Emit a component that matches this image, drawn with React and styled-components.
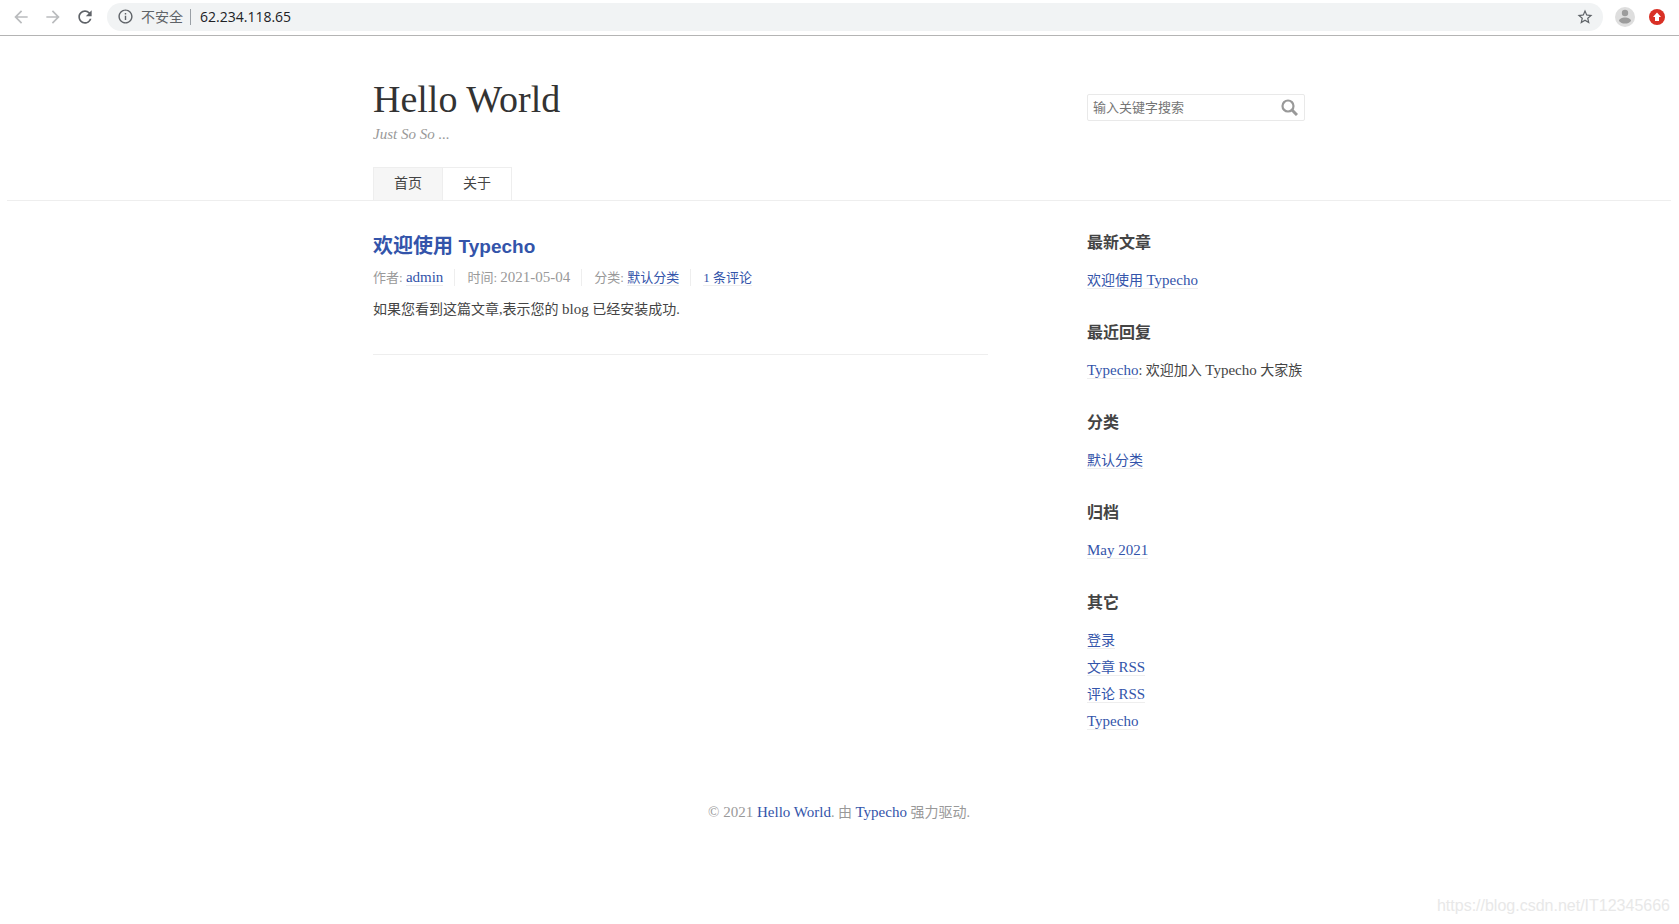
import React from "react";
import styled, { createGlobalStyle } from "styled-components";
import {
  MdArrowBack,
  MdArrowForward,
  MdRefresh,
  MdInfoOutline,
  MdStarBorder,
} from "react-icons/md";

const serif = `"Liberation Serif", "Noto Sans CJK SC", serif`;
const sans = `"Liberation Sans", "Noto Sans CJK SC", sans-serif`;

const GlobalStyle = createGlobalStyle`
  *, *::before, *::after { box-sizing: border-box; }
  body {
    margin: 0;
    background: #fff;
    color: #444;
    font-family: ${serif};
    font-size: 14px;
  }
  h1, h2, h3, p, ul { margin: 0; padding: 0; }
  ul { list-style: none; }
`;

const Page = styled.div`
  position: relative;
  min-height: 100vh;
`;

/* Browser bar */
const BrowserBar = styled.div`
  display: flex;
  align-items: center;
  height: 36px;
  padding: 0 12px 2px 11px;
  border-bottom: 1px solid #b4b4b4;
  font-family: "Open Sans", "Noto Sans CJK SC", sans-serif;
`;

const IconButton = styled.button`
  display: flex;
  align-items: center;
  justify-content: center;
  width: 20px;
  height: 20px;
  flex: none;
  margin-right: ${(p) => p.$gap || 0}px;
  padding: 0;
  border: 0;
  background: none;
  color: ${(p) => p.$color || "#5f6368"};
`;

const AddressBar = styled.div`
  display: flex;
  align-items: center;
  flex: 1;
  height: 28px;
  margin-right: 12px;
  padding: 0 8px 0 10px;
  border-radius: 14px;
  background: #f1f3f4;
`;

const Insecure = styled.span`
  margin-left: 7px;
  padding-right: 7px;
  border-right: 1px solid #9aa0a6;
  color: #5f6368;
  font-size: 14px;
  line-height: 16px;
`;

const Url = styled.input`
  flex: 1;
  min-width: 0;
  padding: 0 0 0 9px;
  border: 0;
  outline: 0;
  background: none;
  color: #202124;
  font: inherit;
  font-size: 14px;
`;

/* Blog */
const Site = styled.div`
  padding: 0 8px 0 7px;
`;

const Container = styled.div`
  display: grid;
  grid-template-columns: 9fr 3fr;
  max-width: 952px;
  margin: 0 auto;
`;

const SiteHeader = styled.header`
  padding-top: 41px;
  border-bottom: 1px solid #eee;
`;

const Brand = styled.div`
  padding: 0 10px;
`;

const SiteName = styled.h1`
  color: #333;
  font-size: 38px;
  font-weight: 400;
  line-height: 44px;

  a { color: inherit; text-decoration: none; }
`;

const Tagline = styled.p`
  margin-top: 3px;
  color: #999;
  font-size: 15px;
  font-style: italic;
  line-height: 20px;
`;

const SearchForm = styled.form`
  display: flex;
  align-items: center;
  height: 27px;
  margin: 17px 10px 0;
  padding: 0 5px;
  border: 1px solid #e9e9e9;
  border-radius: 2px;
`;

const SearchInput = styled.input`
  flex: 1;
  min-width: 0;
  padding: 0;
  border: 0;
  outline: 0;
  background: none;
  font-family: ${sans};
  font-size: 13px;

  &::placeholder { color: #757575; opacity: 1; }
`;

const Nav = styled.nav`
  display: flex;
  grid-column: 1 / -1;
  margin-top: 23px;
  padding: 0 10px;
`;

const NavLink = styled.a`
  padding: 0 20px;
  border: 1px solid #eee;
  border-bottom: 0;
  background: ${(p) => (p.$current ? "#f6f6f6" : "#fff")};
  color: #444;
  line-height: 32px;
  text-decoration: none;

  & + & { margin-left: -1px; }
`;

const Columns = styled(Container)`
  grid-template-columns: 8fr 1fr 3fr;
  padding-top: 32px;
`;

const Main = styled.main`
  padding: 0 10px;
`;

const Latin = styled.span`
  font-size: 15px;
`;

const TextLink = styled.a`
  border-bottom: ${(p) => (p.$plain ? "0" : "1px solid #eee")};
  color: #3354aa;
  text-decoration: none;
`;

const Post = styled.article`
  padding-bottom: 31px;
  border-bottom: 1px solid #eee;
`;

const PostTitle = styled.h2`
  font-family: ${sans};
  font-size: 20px;
  line-height: 26px;

  ${Latin} { font-size: 19px; }
`;

const Meta = styled.ul`
  display: flex;
  margin-top: 9px;
  color: #999;
  font-size: 13px;
  line-height: 17px;

  li + li {
    margin-left: 11px;
    padding-left: 12px;
    border-left: 1px solid #eee;
  }
`;

const PostBody = styled.p`
  margin-top: 10px;
  line-height: 27px;
`;

const Sidebar = styled.aside`
  grid-column: 3;
  padding: 0 10px;
`;

const Widget = styled.section`
  margin-bottom: 29px;
  white-space: nowrap;
  line-height: 27px;
`;

const WidgetTitle = styled.h3`
  margin-bottom: 14px;
  font-family: ${sans};
  font-size: 16px;
  line-height: 20px;
`;

const SiteFooter = styled.footer`
  padding: 35px 0 60px;
  color: #999;
  line-height: 27px;
  text-align: center;
`;

const Watermark = styled.div`
  position: absolute;
  right: 9px;
  bottom: 8px;
  color: #e8e8e8;
  font-family: ${sans};
  font-size: 16px;
  line-height: 20px;
`;

const ProfileIcon = () => (
  <svg width="20" height="20" viewBox="0 0 20 20">
    <circle cx="10" cy="10" r="10" fill="#dedede" />
    <circle cx="10" cy="6" r="3.2" fill="#9c9c9c" />
    <path d="M4 14c0-2.4 3-3.6 6-3.6s6 1.200 6 3.600c-1.300 1.700-3.500 2.600-6 2.600S5.300 15.700 4 14z" fill="#9c9c9c" />
  </svg>
);

const UpdateIcon = () => (
  <svg width="16" height="16" viewBox="0 0 16 16">
    <circle cx="8" cy="8" r="8" fill="#d93025" />
    <path d="M8 3.500L12 8H10V12H6V8H4z" fill="#fff" />
  </svg>
);

const SearchIcon = () => (
  <svg width="17" height="17" viewBox="0 0 17 17" fill="none" stroke="#999">
    <circle cx="7" cy="7" r="5.500" strokeWidth="2.200" />
    <path d="M11 11l5 5" strokeWidth="3" />
  </svg>
);

const widgets = [
  {
    title: "最新文章",
    items: [<TextLink href="#post">欢迎使用 <Latin>Typecho</Latin></TextLink>],
  },
  {
    title: "最近回复",
    items: [
      <>
        <TextLink href="#comment"><Latin>Typecho</Latin></TextLink>: 欢迎加入 <Latin>Typecho</Latin> 大家族
      </>,
    ],
  },
  { title: "分类", items: [<TextLink href="#category">默认分类</TextLink>] },
  {
    title: "归档",
    items: [<TextLink href="#archive"><Latin>May 2021</Latin></TextLink>],
  },
  {
    title: "其它",
    items: [
      <TextLink href="#login">登录</TextLink>,
      <TextLink href="#feed">文章 <Latin>RSS</Latin></TextLink>,
      <TextLink href="#comments-feed">评论 <Latin>RSS</Latin></TextLink>,
      <TextLink href="#typecho"><Latin>Typecho</Latin></TextLink>,
    ],
  },
];

export default function App() {
  return (
    <Page>
      <GlobalStyle />
      <BrowserBar>
        <IconButton aria-label="后退" $gap={12} $color="#babcbe"><MdArrowBack size={20} /></IconButton>
        <IconButton aria-label="前进" $gap={12} $color="#babcbe"><MdArrowForward size={20} /></IconButton>
        <IconButton aria-label="刷新" $gap={12}><MdRefresh size={20} /></IconButton>
        <AddressBar>
          <MdInfoOutline size={17} color="#5f6368" />
          <Insecure>不安全</Insecure>
          <Url aria-label="地址" defaultValue="62.234.118.65" />
          <IconButton aria-label="收藏"><MdStarBorder size={18} /></IconButton>
        </AddressBar>
        <IconButton aria-label="用户" $gap={12}><ProfileIcon /></IconButton>
        <IconButton aria-label="更新"><UpdateIcon /></IconButton>
      </BrowserBar>

      <Site>
        <SiteHeader>
          <Container>
            <Brand>
              <SiteName><a href="#home">Hello World</a></SiteName>
              <Tagline>Just So So ...</Tagline>
            </Brand>
            <SearchForm role="search" onSubmit={(e) => e.preventDefault()}>
              <SearchInput aria-label="搜索关键字" placeholder="输入关键字搜索" />
              <IconButton type="submit" aria-label="搜索"><SearchIcon /></IconButton>
            </SearchForm>
            <Nav>
              <NavLink href="#home" $current>首页</NavLink>
              <NavLink href="#about">关于</NavLink>
            </Nav>
          </Container>
        </SiteHeader>

        <Columns>
          <Main>
            <Post>
              <PostTitle>
                <TextLink href="#post" $plain>欢迎使用 <Latin>Typecho</Latin></TextLink>
              </PostTitle>
              <Meta>
                <li>作者: <TextLink href="#author"><Latin>admin</Latin></TextLink></li>
                <li>时间: <Latin as="time">2021-05-04</Latin></li>
                <li>分类: <TextLink href="#category">默认分类</TextLink></li>
                <li><TextLink href="#comments">1 条评论</TextLink></li>
              </Meta>
              <PostBody>
                如果您看到这篇文章,表示您的 <Latin>blog</Latin> 已经安装成功.
              </PostBody>
            </Post>
          </Main>
          <Sidebar>
            {widgets.map((w) => (
              <Widget key={w.title}>
                <WidgetTitle>{w.title}</WidgetTitle>
                <ul>
                  {w.items.map((item, i) => (
                    <li key={i}>{item}</li>
                  ))}
                </ul>
              </Widget>
            ))}
          </Sidebar>
        </Columns>

        <SiteFooter>
          <Latin>© 2021 <TextLink href="#home" $plain>Hello World</TextLink></Latin>. 由{" "}
          <TextLink href="#typecho" $plain><Latin>Typecho</Latin></TextLink> 强力驱动.
        </SiteFooter>
      </Site>
      <Watermark>https://blog.csdn.net/IT12345666</Watermark>
    </Page>
  );
}
